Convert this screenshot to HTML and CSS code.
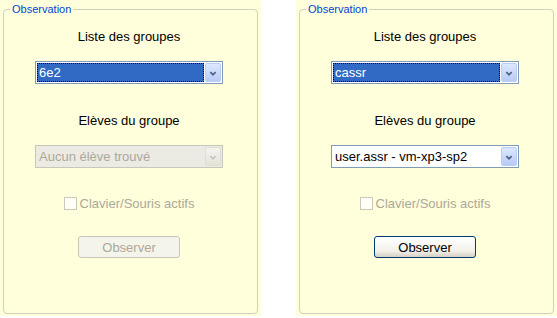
FILE: index.html
```html
<!DOCTYPE html>
<html lang="fr">
<head>
    <meta charset="UTF-8">
    <title>Observation</title>
    <link rel="stylesheet" href="styles.css">
</head>
<body>
    <main class="panels">
        <div class="panel">
            <fieldset class="box">
                <legend>Observation</legend>
                <div class="group-label">Liste des groupes</div>
                <div class="combo">
                    <span class="combo-value selected">6e2</span>
                    <span class="combo-btn">
                        <svg width="16" height="19" viewBox="0 0 16 19"><polyline points="5,8 8,11 11,8" fill="none" stroke="#4d6185" stroke-width="2"/></svg>
                    </span>
                </div>
                <div class="group-label second">Elèves du groupe</div>
                <div class="combo disabled">
                    <span class="combo-value">Aucun élève trouvé</span>
                    <span class="combo-btn">
                        <svg width="16" height="19" viewBox="0 0 16 19"><polyline points="5,8 8,11 11,8" fill="none" stroke="#c9c7ba" stroke-width="2"/></svg>
                    </span>
                </div>
                <label class="check-row">
                    <span class="check"></span>
                    <span>Clavier/Souris actifs</span>
                </label>
                <button class="btn" disabled>Observer</button>
            </fieldset>
        </div>
        <div class="panel">
            <fieldset class="box">
                <legend>Observation</legend>
                <div class="group-label">Liste des groupes</div>
                <div class="combo">
                    <span class="combo-value selected">cassr</span>
                    <span class="combo-btn">
                        <svg width="16" height="19" viewBox="0 0 16 19"><polyline points="5,8 8,11 11,8" fill="none" stroke="#4d6185" stroke-width="2"/></svg>
                    </span>
                </div>
                <div class="group-label second">Elèves du groupe</div>
                <div class="combo">
                    <span class="combo-value">user.assr - vm-xp3-sp2</span>
                    <span class="combo-btn">
                        <svg width="16" height="19" viewBox="0 0 16 19"><polyline points="5,8 8,11 11,8" fill="none" stroke="#4d6185" stroke-width="2"/></svg>
                    </span>
                </div>
                <label class="check-row">
                    <span class="check"></span>
                    <span>Clavier/Souris actifs</span>
                </label>
                <button class="btn">Observer</button>
            </fieldset>
        </div>
    </main>
</body>
</html>
```

FILE: styles.css
```css
body {
    margin: 0;
    background-color: #fff;
    font-family: "Liberation Sans", Arial, sans-serif;
    font-size: 13px;
    color: #000;
}

.panels {
    display: flex;
    gap: 35px;
}

.panel {
    width: 261px;
    height: 316px;
    box-sizing: border-box;
    padding: 3px 3px 2px 3px;
    background-color: #ffffdc;
    display: flex;
}

.box {
    flex: 1;
    margin: 0;
    padding: 0 3px 0 0;
    border: 1px solid #d0d0bf;
    border-radius: 4px;
    display: flex;
    flex-direction: column;
    align-items: center;
}

legend {
    margin-left: 6px;
    padding: 0 2px;
    font-size: 11px;
    line-height: 13px;
    color: #0046d5;
}

.group-label {
    margin-top: 13px;
    line-height: 16px;
}

.group-label.second {
    margin-top: 29px;
}

.combo {
    margin-top: 16px;
    width: 188px;
    height: 23px;
    box-sizing: border-box;
    border: 1px solid #7f9db9;
    background-color: #fff;
    padding: 1px;
    display: flex;
}

.combo-value {
    flex: 1;
    padding-left: 1px;
    border: 1px solid transparent;
    line-height: 17px;
    white-space: nowrap;
    overflow: hidden;
}

.combo-value.selected {
    background-color: #316ac5;
    color: #fff;
    border: 1px dotted #000;
    margin-right: 1px;
}

.combo-btn {
    width: 16px;
    height: 19px;
    box-sizing: border-box;
    border: 1px solid #bccdf5;
    border-radius: 2px;
    background: linear-gradient(#dde8fe, #b6cbf7);
    display: flex;
}

.combo.disabled {
    border-color: #c9c7ba;
    background-color: #ebebe4;
    color: #aca899;
}

.combo.disabled .combo-btn {
    border-color: #e0dfd6;
    background: linear-gradient(#f4f3ee, #e4e3dc);
}

.check-row {
    margin-top: 27px;
    height: 16px;
    display: flex;
    align-items: center;
    gap: 3px;
    color: #aca899;
}

.check {
    width: 13px;
    height: 13px;
    box-sizing: border-box;
    border: 1px solid #cac8bb;
    background-color: #fffff6;
}

.btn {
    margin-top: 25px;
    width: 102px;
    height: 22px;
    border: 1px solid #003c74;
    border-radius: 3px;
    background: linear-gradient(#fff, #f2f1ea 70%, #d6d0c5);
    font-family: "Liberation Sans", Arial, sans-serif;
    font-size: 13px;
    color: #000;
    padding: 0;
}

.btn:disabled {
    border-color: #c9c7ba;
    background: #f5f4ea;
    color: #aca899;
}
```
